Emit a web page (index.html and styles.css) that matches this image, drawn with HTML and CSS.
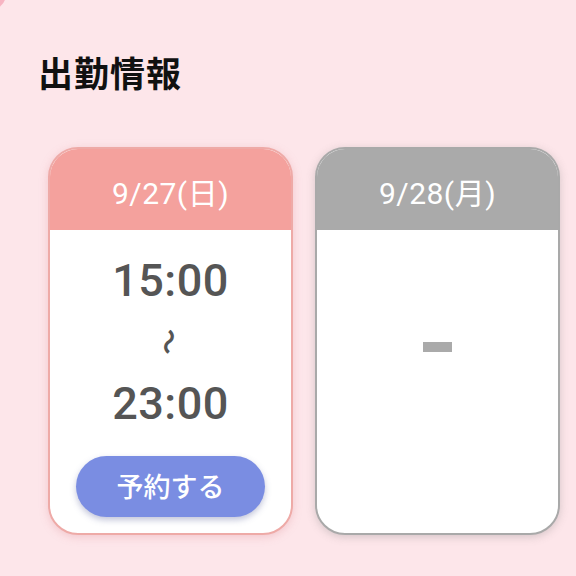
FILE: index.html
```html
<!DOCTYPE html>
<html lang="ja">
<head>
<meta charset="utf-8">
<link rel="stylesheet" href="styles.css">
</head>
<body>
<div class="corner"></div>
<main class="page">
  <h1 class="title">出勤情報</h1>
  <div class="cards">
    <section class="card card-on">
      <div class="card-head">9/27(日)</div>
      <div class="card-body">
        <div class="time">15:00</div>
        <div class="wave">〜</div>
        <div class="time">23:00</div>
        <button class="reserve">予約する</button>
      </div>
    </section>
    <section class="card card-off">
      <div class="card-head">9/28(月)</div>
      <div class="card-body">
        <div class="dash" aria-label="-"></div>
      </div>
    </section>
  </div>
</main>
</body>
</html>
```
FILE: styles.css
```css
html, body {
  margin: 0;
  padding: 0;
  background: #fde6ea;
  width: 576px;
  height: 576px;
  overflow: hidden;
}
body {
  font-family: Roboto, "Noto Sans CJK JP", sans-serif;
  position: relative;
}
.corner {
  position: absolute;
  left: -26px;
  top: -22px;
  width: 32px;
  height: 32px;
  border-radius: 50%;
  background: #f7b4c2;
}
.page {
  padding: 48px 0 0 0;
}
.title {
  margin: 0 0 0 38px;
  font-family: "Noto Sans CJK JP", sans-serif;
  font-weight: 700;
  font-size: 35px;
  line-height: 48px;
  color: #111;
  letter-spacing: 1px;
}
.cards {
  display: flex;
  gap: 22px;
  padding-left: 48px;
  margin-top: 51px;
}
.card {
  width: 245px;
  height: 388px;
  box-sizing: border-box;
  border-radius: 30px;
  overflow: hidden;
  display: flex;
  flex-direction: column;
  background: #fff;
}
.card-on {
  border: 2px solid #eeaaa7;
  box-shadow: 0 2px 8px rgba(220, 140, 150, 0.35);
}
.card-off {
  border: 2px solid #a9a9a9;
  box-shadow: 0 2px 8px rgba(120, 120, 120, 0.3);
}
.card-head {
  height: 81px;
  flex: none;
  display: flex;
  align-items: center;
  justify-content: center;
  color: #fff;
  font-size: 30px;
  font-weight: 400;
  letter-spacing: 0.5px;
  padding-top: 2px;
  box-sizing: border-box;
}
.card-on .card-head { background: #f4a19d; }
.card-off .card-head { background: #aaaaaa; }
.card-body {
  flex: 1;
  display: flex;
  flex-direction: column;
  align-items: center;
}
.time {
  font-size: 45px;
  font-weight: 500;
  color: #555555;
  line-height: 52px;
  letter-spacing: 0.5px;
}
.card-body .time:first-child { margin-top: 25px; }
.wave {
  font-family: "Noto Sans CJK JP", sans-serif;
  font-size: 26px;
  font-weight: 700;
  color: #555555;
  transform: rotate(100deg);
  line-height: 22px;
  margin: 24px 0 25px;
}
.reserve {
  margin-top: 26px;
  width: 189px;
  height: 61px;
  border: none;
  border-radius: 31px;
  background: #7a8de2;
  color: #fff;
  font-family: "Noto Sans CJK JP", sans-serif;
  font-size: 27px;
  font-weight: 500;
  box-shadow: 0 3px 6px rgba(80, 90, 150, 0.35);
  padding: 0 0 2px;
}
.dash {
  margin-top: 112px;
  width: 29px;
  height: 10px;
  background: #aaaaaa;
}
```
